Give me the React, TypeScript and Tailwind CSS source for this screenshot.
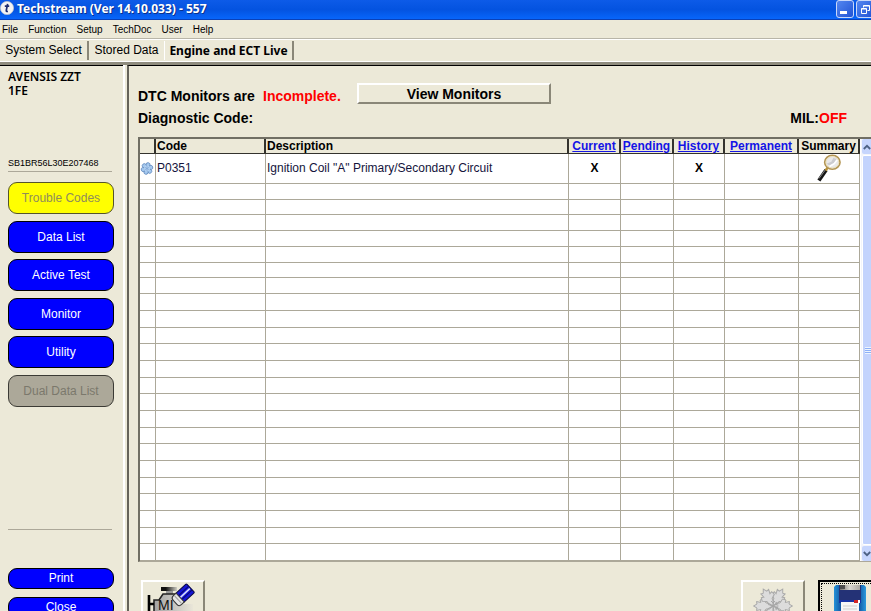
import clsx from "clsx";

const menuItems = ["File", "Function", "Setup", "TechDoc", "User", "Help"];

const sideButtons = [
  { label: "Trouble Codes", style: "bg-[#ffff00] text-[#8f8c5c] border-[#55552a]" },
  { label: "Data List", style: "bg-[#0000ff] text-white border-black" },
  { label: "Active Test", style: "bg-[#0000ff] text-white border-black" },
  { label: "Monitor", style: "bg-[#0000ff] text-white border-black" },
  { label: "Utility", style: "bg-[#0000ff] text-white border-black" },
  { label: "Dual Data List", style: "bg-[#aca899] text-[#7b786c] border-[#3c3b35]" },
];

const columns = [
  { label: "", width: "w-[16px]" },
  { label: "Code", width: "w-[110px]" },
  { label: "Description", width: "w-auto" },
  { label: "Current", width: "w-[52px]", link: true },
  { label: "Pending", width: "w-[53px]", link: true },
  { label: "History", width: "w-[51px]", link: true },
  { label: "Permanent", width: "w-[74px]", link: true },
  { label: "Summary", width: "w-[61px]", center: true },
];

const rowHeight = (i: number) => {
  if (i < 7) return i % 4 === 1 ? "h-[15px]" : "h-[16px]";
  return i % 3 === 0 ? "h-[16px]" : "h-[17px]";
};

const emptyRows = Array.from({ length: 23 }, (_, i) => i);

const cell = "border-r border-b border-[#aca899] p-0";

const FlakeIcon = () => (
  <svg viewBox="0 0 14 14" className="block h-[13px] w-[14px]">
    {[15, 75, 135, 195, 255, 315].map((a) => (
      <circle
        key={a}
        cx="7"
        cy="2.9"
        r="2.3"
        transform={`rotate(${a} 7 7)`}
        fill="#a4c8ee"
        stroke="#5f88bd"
        strokeWidth="0.8"
      />
    ))}
    <circle cx="7" cy="7" r="3.2" fill="#b4d2f2" />
    <path d="M7 4.2v5.6M4.6 5.6l4.8 2.8M9.4 5.6 4.6 8.4" stroke="#7ba4d4" strokeWidth="0.7" />
  </svg>
);

const MagnifierIcon = () => (
  <svg viewBox="0 0 26 30" className="block h-[29px] w-[25px]">
    <path d="M10.5 16.5 3 27.5" stroke="#141414" strokeWidth="3.8" />
    <path d="M10 16 3 25.5" stroke="#8d8d8d" strokeWidth="1" />
    <path d="m12.5 13.5-2.5 3.5" stroke="#b89238" strokeWidth="2.6" />
    <ellipse cx="17" cy="8.5" rx="8" ry="7.3" fill="#eeeeee" stroke="#b39553" strokeWidth="1.7" />
    <ellipse cx="17" cy="8.5" rx="6.6" ry="5.9" fill="#e9e9ea" stroke="#ead9a4" strokeWidth="0.7" />
    <path d="m11 10 5-2 2-4 4 1-3 4-5 3Z" fill="#cbcbcf" />
    <path d="m14 13 5-3 3-4" stroke="#fff" strokeWidth="1.8" fill="none" />
  </svg>
);

const EngineIcon = () => (
  <svg viewBox="0 0 52 56" className="block h-[56px] w-[52px]">
    <defs>
      <linearGradient id="block" x1="0" x2="1">
        <stop offset="0" stopColor="#a3a3a3" />
        <stop offset="0.6" stopColor="#cdcbc5" />
        <stop offset="1" stopColor="#e9e6d8" />
      </linearGradient>
      <linearGradient id="cap" x1="0" x2="1">
        <stop offset="0.3" stopColor="#111" />
        <stop offset="1" stopColor="#cfcdc4" />
      </linearGradient>
    </defs>
    <path d="M15 4h16v4H15z" fill="url(#cap)" />
    <path d="M20 8h7v4h-7z" fill="#999" />
    <path d="M8 46V17h5l4-6h14l4 10h12v25z" fill="url(#block)" />
    <path d="M8 46V17h5l4-6h12" fill="none" stroke="#222" strokeWidth="1.6" />
    <path d="M3 12v28M3 21h5" stroke="#000" strokeWidth="2.6" />
    <text x="12" y="27" fontSize="14" fontFamily="Liberation Sans, Arial, sans-serif" fill="#111">
      MI
    </text>
    <g transform="rotate(-43 37.5 11.5)">
      <rect x="32" y="5.5" width="15" height="12" rx="1" fill="#1515d5" stroke="#080840" />
      <path d="M32 9h15M32 14h15" stroke="#080870" />
      <path d="M33 11.5h13" stroke="#d7dcff" strokeWidth="1.6" />
      <path d="M33 5.5h-4q-3 0-3 3v6q0 3 3 3h4z" fill="#e5e5e5" stroke="#333" />
      <path d="M30 6.5v10" stroke="#999" />
    </g>
  </svg>
);

const SnowflakeIcon = () => (
  <svg viewBox="0 0 42 42" className="block h-[42px] w-[42px]">
    {[30, 90, 150, 210, 270, 330].map((a) => (
      <path
        key={a}
        d="M18 17.5V14l-4-2.5L15 8l2.5.8-1-4.3L19 5l2-3.5L23 5l2.5-.5-1 4.3L27 8l1 3.5-4 2.5v3.5L21 21z"
        transform={`rotate(${a} 21 21)`}
        fill="#dcdcdc"
        stroke="#a9a9a9"
        strokeWidth="1"
      />
    ))}
    {[0, 60, 120].map((a) => (
      <path key={a} d="M21 15v12M19 16l2 2 2-2" transform={`rotate(${a} 21 21)`} stroke="#a6a6a6" fill="none" />
    ))}
  </svg>
);

const FloppyIcon = () => (
  <svg viewBox="0 0 32 48" className="block h-[48px] w-[32px]">
    <defs>
      <linearGradient id="disk" x1="0" x2="1">
        <stop offset="0" stopColor="#2492d8" />
        <stop offset="0.2" stopColor="#145da8" />
        <stop offset="0.8" stopColor="#145da8" />
        <stop offset="1" stopColor="#2c9add" />
      </linearGradient>
      <linearGradient id="shutter" x1="0" x2="1">
        <stop offset="0" stopColor="#77736e" />
        <stop offset="0.5" stopColor="#dad7d0" />
        <stop offset="1" stopColor="#aaa69f" />
      </linearGradient>
    </defs>
    <path d="M2 0h28l2 2v46H0V2z" fill="url(#disk)" />
    <path d="M5 0h22v15H5z" fill="#243276" />
    <path d="M6 0h20v5H6z" fill="url(#shutter)" />
    <path d="M6 0h5v4H6z" fill="#4c4c4c" />
    <path d="M5 15h22v3H5z" fill="#1733a5" />
    <path d="M7 17h18v29H7z" fill="#f6f6f6" />
    <path d="M20 15h4v3h-4z" fill="#d22525" />
    <path d="M24 15h2v3h-2z" fill="#fff" />
    <path d="M9 21h14M9 24h14M9 27h14" stroke="#cfcfcf" />
  </svg>
);

const Chevron = ({ down }: { down?: boolean }) => (
  <svg viewBox="0 0 8 6" className={clsx("h-[6px] w-[8px]", down && "rotate-180")}>
    <path d="M0.8 5 4 1.8 7.2 5" fill="none" stroke="#4d6185" strokeWidth="1.8" />
  </svg>
);

const TitleBar = () => (
  <header className="flex h-5 shrink-0 items-start border-b border-[#0a41b8] bg-linear-to-b from-[#0d5be8] via-[#0453e0] to-[#0866fb]">
    <svg viewBox="0 0 14 14" className="mt-px h-[14px] w-[14px] shrink-0">
      <circle cx="7" cy="7" r="6.6" fill="#f4f4f4" stroke="#b8c0d0" strokeWidth="0.8" />
      <path d="M7.6 2.8 6.3 9.3q-.2 1.6 1.6 1.1M4.8 5.2h4.4" fill="none" stroke="#1c2c72" strokeWidth="1.7" />
    </svg>
    <h1 className="ml-[3px] grow font-['Noto_Sans',sans-serif] text-[12px] leading-[18px] font-bold whitespace-nowrap text-white [text-shadow:1px_1px_0_#0a318c]">
      Techstream (Ver 14.10.033) - 557
    </h1>
    <div className="-mr-[3px] flex shrink-0 gap-[2px]">
      <button
        aria-label="Minimize"
        className="flex h-[18px] w-[18px] items-end rounded-[3px] border border-[#c9d8fa] bg-linear-to-br from-[#5486f0] to-[#2253d4] pb-[3px] pl-[3px]"
      >
        <span className="h-[3px] w-[7px] bg-white" />
      </button>
      <button
        aria-label="Restore"
        className="flex h-[18px] w-[18px] items-center justify-center rounded-[3px] border border-[#c9d8fa] bg-linear-to-br from-[#5486f0] to-[#2253d4]"
      >
        <svg viewBox="0 0 11 11" className="h-[11px] w-[11px]" fill="none" stroke="#fff">
          <path d="M3.5 3.5v-2h6v5h-2M3.5 2h6" />
          <path d="M1.5 4.5h5v5h-5zM1.5 5h5" />
        </svg>
      </button>
    </div>
  </header>
);

const Sidebar = () => (
  <aside className="w-[123px] shrink-0 border-t border-black pl-2">
    <p className="mt-1 h-[88px] font-['Noto_Sans',sans-serif] text-[12px] leading-[14px] font-semibold">
      AVENSIS ZZT
      <br />
      1FE
    </p>
    <p className="mr-[11px] border-b border-[#aca899] pb-[3px] text-[9px] leading-[10px]">
      SB1BR56L30E207468
    </p>
    <nav className="mt-[10px] mr-[9px] flex h-[225px] flex-col justify-between">
      {sideButtons.map((b) => (
        <button key={b.label} className={clsx("h-8 rounded-[9px] border text-[12px]", b.style)}>
          {b.label}
        </button>
      ))}
    </nav>
    <hr className="mt-[122px] mr-[11px] border-[#aca899]" />
    <div className="mt-[38px] mr-[9px] flex flex-col gap-2">
      {["Print", "Close"].map((label) => (
        <button
          key={label}
          className="h-[21px] rounded-[9px] border border-black bg-[#0000ff] text-[12px] leading-[19px] text-white"
        >
          {label}
        </button>
      ))}
    </div>
  </aside>
);

const CodeTable = () => (
  <div className="-mr-[7px] flex border-t-2 border-b border-l-2 border-t-[#716f64] border-b-[#aca899] border-l-[#716f64]">
    <table className="grow table-fixed border-separate border-spacing-0 bg-white text-[12px]">
      <thead>
        <tr className="h-[15px] bg-[#ece9d8]">
          {columns.map((c) => (
            <th
              key={c.label}
              className={clsx(
                "border-r-2 border-b border-[#33322d] p-0 leading-[14px] font-bold",
                c.width,
                c.link || c.center ? "text-center" : "pl-px text-left"
              )}
            >
              {c.link ? (
                <a href="#" className="text-[#1414e6] underline">
                  {c.label}
                </a>
              ) : (
                c.label
              )}
            </th>
          ))}
        </tr>
      </thead>
      <tbody>
        <tr className="h-[30px]">
          <td className={cell}>
            <FlakeIcon />
          </td>
          <td className={clsx(cell, "pb-[2px] pl-px text-[#14143c]")}>P0351</td>
          <td className={clsx(cell, "pb-[2px] pl-px text-[#14143c]")}>
            Ignition Coil "A" Primary/Secondary Circuit
          </td>
          <td className={clsx(cell, "pb-[2px] text-center font-bold")}>X</td>
          <td className={cell} />
          <td className={clsx(cell, "pb-[2px] text-center font-bold")}>X</td>
          <td className={cell} />
          <td className={clsx(cell, "pl-[17px]")}>
            <MagnifierIcon />
          </td>
        </tr>
        {emptyRows.map((i) => (
          <tr key={i} className={rowHeight(i)}>
            {columns.map((c) => (
              <td key={c.label} className={cell} />
            ))}
          </tr>
        ))}
      </tbody>
    </table>
    <div className="flex w-[18px] shrink-0 flex-col border-l border-white bg-[#f3f4fb] pl-px">
      <button aria-label="Scroll up" className="flex h-[15px] items-center rounded-[2px] bg-[#c6d5fd] pl-px">
        <Chevron />
      </button>
      <div className="my-px flex grow items-center rounded-[2px] border border-white bg-[#c3d3fd] pl-[2px]">
        <div className="h-[7px] w-[8px] bg-[repeating-linear-gradient(#eef4fe_0_1px,#8cb0f8_1px_2px)]" />
      </div>
      <button aria-label="Scroll down" className="flex h-[15px] items-center rounded-[2px] bg-[#c6d5fd] pl-px">
        <Chevron down />
      </button>
    </div>
  </div>
);

const toolButton =
  "flex h-[64px] w-[64px] shrink-0 items-start border-2 border-t-white border-l-white border-r-[#8a8778] border-b-[#8a8778] bg-[#ece9d8]";

export default function App() {
  return (
    <div className="flex h-screen flex-col overflow-hidden bg-[#ece9d8] font-['Liberation_Sans',Arial,sans-serif] text-black">
      <TitleBar />
      <nav className="flex h-[19px] shrink-0 items-center gap-[10px] border-b border-[#b8b5a8] pl-[2px] text-[10px]">
        {menuItems.map((item) => (
          <button key={item}>{item}</button>
        ))}
      </nav>
      <div role="tablist" className="flex h-[23px] shrink-0 items-stretch border-t border-b border-white text-[12px]">
        <button role="tab" className="my-px w-[89px] border-r-2 border-[#8a8778] pb-[2px]">
          System Select
        </button>
        <button role="tab" className="my-px w-[76px] border-r border-white pb-[2px]">
          Stored Data
        </button>
        <button
          role="tab"
          aria-selected="true"
          className="my-px w-[129px] border-r-2 border-[#8a8778] font-['Noto_Sans',sans-serif] font-bold"
        >
          Engine and ECT Live
        </button>
      </div>
      <div className="h-[3px] shrink-0 bg-[#8f8c7e]" />

      <div className="flex grow">
        <Sidebar />
        <div className="w-[4px] shrink-0 border-l-2 border-white" />
        <main className="min-w-0 grow border-t border-l-2 border-t-black border-l-[#65635a] pl-[9px]">
          <div className="mt-[17px] flex h-[27px] items-start text-[14px] font-bold">
            <p className="mt-1 w-[125px] leading-[18px] whitespace-nowrap">DTC Monitors are</p>
            <p className="mt-1 w-[94px] leading-[18px] text-[#ff0000]">Incomplete.</p>
            <button className="h-[21px] w-[194px] border-2 border-t-white border-r-[#8a8778] border-b-[#8a8778] border-l-white leading-[16px]">
              View Monitors
            </button>
          </div>
          <div className="flex h-[27px] justify-between pr-6 text-[14px] leading-[16px] font-bold">
            <h2>Diagnostic Code:</h2>
            <p>
              MIL:<span className="text-[#ff0000]">OFF</span>
            </p>
          </div>
          <CodeTable />
          <div className="mt-[18px] -mr-[11px] flex gap-[13px] pl-[3px]">
            <button aria-label="Clear codes" className={clsx(toolButton, "mr-auto pl-[3px] pt-px")}>
              <EngineIcon />
            </button>
            <button aria-label="Freeze frame" className={clsx(toolButton, "justify-center pt-[3px]")}>
              <SnowflakeIcon />
            </button>
            <button aria-label="Save" className="flex h-[64px] w-[64px] shrink-0 border-2 border-black bg-[#ece9d8] p-px">
              <span className="flex h-full grow items-start justify-center border border-dotted border-black pt-px">
                <FloppyIcon />
              </span>
            </button>
          </div>
        </main>
      </div>
    </div>
  );
}
